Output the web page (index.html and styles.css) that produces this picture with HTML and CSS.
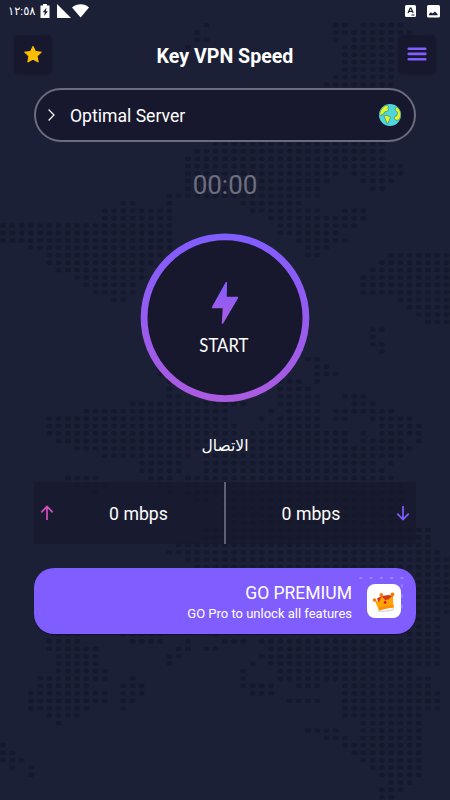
FILE: index.html
```html
<!DOCTYPE html>
<html lang="en">
<head>
<meta charset="utf-8">
<title>Key VPN Speed</title>
<link rel="stylesheet" href="styles.css">
</head>
<body>
<svg class="map" width="450" height="800" viewBox="0 0 450 800" aria-hidden="true">
  <g id="land" fill="#15192d"></g>
</svg>
<div class="screen">
  <div class="status">
    <span class="time" dir="ltr">١٢:٥٨</span>
    <svg class="status-left" width="50" height="16" viewBox="0 0 50 16" fill="#fff">
      <path d="M3 1.500V0h4v1.500h2.500v12.500H.5V1.500z"/>
      <path d="M6.600 3.500 2.800 8.300h2L4.200 12l3.700-4.800H5.800z" fill="#1c2036"/>
      <path d="M17 0v14h14z"/>
      <path d="M32 3.500C37-.8 44.500-.8 49 3.500L40.600 13.500z"/>
    </svg>
    <svg class="status-right" width="36" height="14" viewBox="0 0 36 14">
      <rect x="0" y="1" width="11" height="12" rx="1.500" fill="#fff"/>
      <path d="M3 9 5.200 4h.8L8.200 9M3.900 7.300h3.400M6.500 11h3" fill="none" stroke="#1c2036" stroke-width="1.200"/>
      <rect x="22" y="1" width="13" height="12.500" rx="1.500" fill="#fff"/>
      <path d="M24 11.200V10l2-1.700 1.500 1.200L30 7.500l2.500 2.500v1.200z" fill="#1c2036"/>
    </svg>
  </div>
  <header class="header">
    <button class="tile" aria-label="Rate">
      <svg width="20" height="20" viewBox="0 0 20 20"><path d="M10 1.300 12.500 6.500l5.900.7-4.300 4 1.100 5.900L10 14.200l-5.200 2.900 1.100-5.900-4.300-4 5.900-.7z" fill="#ffbf00" stroke="#ffbf00" stroke-linejoin="round"/></svg>
    </button>
    <h1 class="title">Key VPN Speed</h1>
    <button class="tile" aria-label="Menu">
      <svg width="20" height="20" viewBox="0 0 20 20"><path d="M1.700 3.700h16.600M1.700 8.900h16.600M1.700 14.200h16.600" stroke="#825dff" stroke-width="2.600" stroke-linecap="round"/></svg>
    </button>
  </header>
  <div class="server">
    <svg width="8" height="12" viewBox="0 0 8 12"><path d="M.600.500 6 6 .600 11.500" fill="none" stroke="#fff" stroke-width="1.200"/></svg>
    <span class="server-name">Optimal Server</span>
    <svg class="globe" width="22" height="22" viewBox="0 0 22 22">
      <circle cx="11" cy="11" r="11" fill="#4fd6dc"/>
      <path d="M1 8.500C2 5 5 1.500 8 1.200l1.500 1.600-.8 1.700L10 5.800 8 7.300l-2.500.7-.8 2-2 .5L2 12l-1.300-1.500zM4.800 11.500l3-.2 3.700 2-1.200 3-1.800 3.500L7 17z" fill="#e0f52a" stroke="#2d7e76" stroke-width=".6" stroke-linejoin="round"/>
      <path d="M16.200 4l2-1C21 5.500 22 8.500 21.800 12L20 16l-3.500.2-1.300-2 .7-1.800 2.300-1L18.400 8l-2.200-1.800z" fill="#e0f52a" stroke="#2d7e76" stroke-width=".6" stroke-linejoin="round"/>
    </svg>
  </div>
  <div class="timer">00:00</div>
  <div class="start">
    <svg width="170" height="170" viewBox="0 0 170 170">
      <defs>
        <linearGradient id="ring" x1="0" y1="0" x2="0" y2="1"><stop offset="0" stop-color="#805dff"/><stop offset="1" stop-color="#ab5be0"/></linearGradient>
      </defs>
      <circle cx="85" cy="84.700" r="84.300" fill="url(#ring)"/>
      <circle cx="85" cy="84.700" r="77.500" fill="#17182e"/>
      <path d="M86.300 49.500 72.500 74.500H83.500l-1 15.500L97.500 64.500H86z" fill="url(#ring)" stroke="url(#ring)" stroke-linejoin="round" stroke-width="1.500"/>
    </svg>
    <span class="start-label">START</span>
  </div>
  <div class="state" dir="rtl" lang="ar">الاتصال</div>
  <div class="speeds">
    <div class="speed up">
      <svg width="14" height="16" viewBox="0 0 14 16"><path d="M7 15V1.500M1.300 7.300 7 1.500l5.700 5.800" fill="none" stroke="#d94fba" stroke-width="1.700"/></svg>
      <span>0 mbps</span>
    </div>
    <div class="speed down">
      <span>0 mbps</span>
      <svg width="14" height="16" viewBox="0 0 14 16"><path d="M7 1v13.500M1.300 8.700 7 14.500l5.700-5.800" fill="none" stroke="#825dff" stroke-width="1.700"/></svg>
    </div>
  </div>
  <div class="premium">
    <div class="premium-text">
      <strong>GO PREMIUM</strong>
      <span>GO Pro to unlock all features</span>
    </div>
    <div class="crown">
      <svg class="specks" width="48" height="36" viewBox="0 0 48 36"><path d="M2 2H46M44 9v26" fill="none" stroke="#9a80ff" stroke-width="2" stroke-linecap="round" stroke-dasharray="1.500 8.800"/></svg>
      <svg class="crown-icon" width="34" height="34" viewBox="0 0 34 34">
        <rect width="34" height="34" rx="8" fill="#fff"/>
        <path d="M11 26q9 2 16-2v2q-8 3-16 1.500z" fill="#d8d8df"/>
        <path d="M10 14.500 14.500 12 22 11l4 1-1 7-13 1z" fill="#d8381a"/>
        <path d="M7.500 16 12 18l2.800-5.500 3.200 3.500 3.500-.5 4-4 1.200 12q-8 .5-14.700 3z" fill="#ffa406"/>
        <path d="M12 23.500q6-2.300 14.600-2.500l.1 2.500q-8 .5-14.500 3z" fill="#ff8f00"/>
        <path d="m18 16.500 1.800 1.700-1.500 2-1.800-1.700z" fill="#d51616"/>
        <g fill="#f57c00"><circle cx="7.500" cy="16" r="1.800"/><circle cx="14.300" cy="10.800" r="1.800"/><circle cx="25.500" cy="10.500" r="1.900"/></g>
      </svg>
    </div>
  </div>
</div>
<script src="map.js"></script>
</body>
</html>
```
FILE: styles.css
```css
* { box-sizing: border-box; }
body {
  margin: 0;
  width: 450px;
  height: 800px;
  overflow: hidden;
  background: #1c2036;
  color: #fff;
  font-family: Roboto, "DejaVu Sans", sans-serif;
}
svg { display: block; flex: none; }
.map { position: absolute; top: 0; left: 0; }
.screen {
  position: relative;
  height: 800px;
  display: flex;
  flex-direction: column;
}
.status {
  height: 35px;
  padding: 4px 9px 0 8px;
  display: flex;
  align-items: flex-start;
}
.time { width: 32px; font-size: 11.500px; line-height: 14px; white-space: nowrap; }
.status-right { margin-left: auto; }
.header {
  height: 39px;
  padding: 0 14px;
  display: flex;
  justify-content: space-between;
  align-items: center;
}
.tile {
  width: 38px;
  height: 39px;
  padding: 0;
  border: 0;
  border-radius: 5px;
  background: #17182e;
  box-shadow: 0 1px 2px #12142888;
  display: grid;
  place-items: center;
}
.title { margin: 5px 0 0; font-size: 19.600px; line-height: 24px; font-weight: 700; }
.server {
  margin: 14px 34px 0;
  height: 54px;
  padding: 0 13px 0 12px;
  border: 2px solid #6b6c7f;
  border-radius: 27px;
  background: #17182e;
  display: flex;
  align-items: center;
}
.server-name { margin: 2px 0 0 14px; font-size: 17.600px; }
.globe { margin-left: auto; }
.timer {
  margin-top: 28px;
  height: 30px;
  line-height: 30px;
  text-align: center;
  font-size: 26px;
  color: #6d6e7e;
}
.start {
  margin: 33px auto 0;
  width: 170px;
  height: 170px;
  display: grid;
}
.start > * { grid-area: 1 / 1; }
.start-label {
  justify-self: center;
  margin: 101px 2px 0 0;
  font: 19px/22px Lato, sans-serif;
  height: 22px;
  transform: scaleX(.88);
}
.state {
  margin-top: 28px;
  height: 30px;
  line-height: 30px;
  text-align: center;
  font-size: 15.500px;
}
.speeds {
  margin: 21px 34px 0;
  height: 62px;
  display: flex;
  background: #171a2baa;
}
.speed {
  flex: 1;
  display: flex;
  align-items: center;
  padding: 0 6px;
  font-size: 17.700px;
}
.speed span { flex: 1; text-align: center; padding-top: 1px; }
.up span { padding-left: 5px; }
.down { border-left: 2px solid #5e6074; }
.down span { padding-right: 6px; }
.premium {
  margin: 24px 34px 0;
  height: 66px;
  border-radius: 20px;
  padding: 0 15px;
  background: #805dff;
  box-shadow: 0 1px 1px #10122a;
  display: flex;
  align-items: center;
  justify-content: flex-end;
  gap: 15px;
}
.premium-text { display: flex; flex-direction: column; align-items: flex-end; padding-top: 2px; }
.premium-text strong { font-size: 17.500px; line-height: 23px; font-weight: 400; }
.premium-text span { font-size: 13px; line-height: 18px; }
.crown { position: relative; }
.specks { position: absolute; left: -9px; top: -8px; }
.crown-icon { position: relative; }
```
FILE: map.js
```js
// Rows of the dotted world map: "row:first-last,..." in grid cells.
const rows = `0:22,36-37,39-43 1:21,36-44 2:21-22,36,38-42 3:20,37-42 4:37-42 5:37-42 6:37-42 7:36-42 8:35-42
16:23-41 17:21-41 18:20-41 19:20-43 20:20-36,38-43 21:20-35,39-42 22:20-34,40-41 23:18-34 24:13-14,18,26-32
25:11-18,27-34,37-39 26:11-18,29-39 27:0-18,30-38 28:0-18,30-36 29:0-18,32-37 30:3-18,33-35 31:5-17,33-34,42-48
32:5-16,41-48 33:6-15,40-48 34:8-15,39-48 35:9-14,39-48 36:10-14,39-48 37:12-13,43-48 38:44-48 39:45-48 40:46-48
41:40-41 42:40 43:40-41 44:41 45:33-34 46:34-35 47:17,34-36 48:18,30-32,34 49:18,30-33 50:18-19,30-34,37-39
51:14-26,30-34,38-40 52:9-24,29,31-34,36-42 53:5-24,28,30-34,36-37,40-44 54:5-25,29-34,41-45 55:5-25,27-37,39,41-45
56:6-25,27-37,39-43,45 57:8-44 58:11-20,22-43 59:15-19,22-40,42 60:15-19,22-41 61:7-10,16-18,20-42 62:8-11,17-18,20-43
63:10,18,20-43 64:21-22,24-43 65:24-43 66:24-43 67:24-43 68:22-46 69:22-46 70:19-46 71:18-47 72:20-48 73:21-48
74:45-48 75:45-48 76:45-48 77:45-48 78:45-48 79:45-48 80:45-47 81:45-47 82:6-8,13-17,23,44-47
83:5-8,14-17,20,24-26,28-47 84:5-10,19-20,22-23,29-47 85:6-10,18-19,28-47 86:6-10,18,27,29-47 87:6-11,26,30-44
88:4-11,14,26,30-46 89:4-9,13-15,26-29,32-34,37-46 90:3-11,13-15,27-29,37-47 91:3-11,13-14,31-34,37-47 92:3-9,13,37-47
93:5-8,37-45 94:6,39-45 95:33-36,39-45 96:35-37,39-45 97:0,37-45 98:0-1,38-45 99:0-2,39-45 100:1,3,40-45
101:3,41-45 102:42-44 103:41-43 104:41-42`;

let dots = "";
for (const row of rows.split(/\s+/)) {
  const [y, runs] = row.split(":");
  for (const run of runs.split(",")) {
    const [from, to = from] = run.split("-").map(Number);
    for (let x = from; x <= to; x++) {
      dots += `<ellipse cx="${(3.2 + x * 9.236).toFixed(1)}" cy="${(25 + y * 7.426).toFixed(1)}" rx="2.9" ry="2.3"/>`;
    }
  }
}
document.getElementById("land").innerHTML = dots;
```
